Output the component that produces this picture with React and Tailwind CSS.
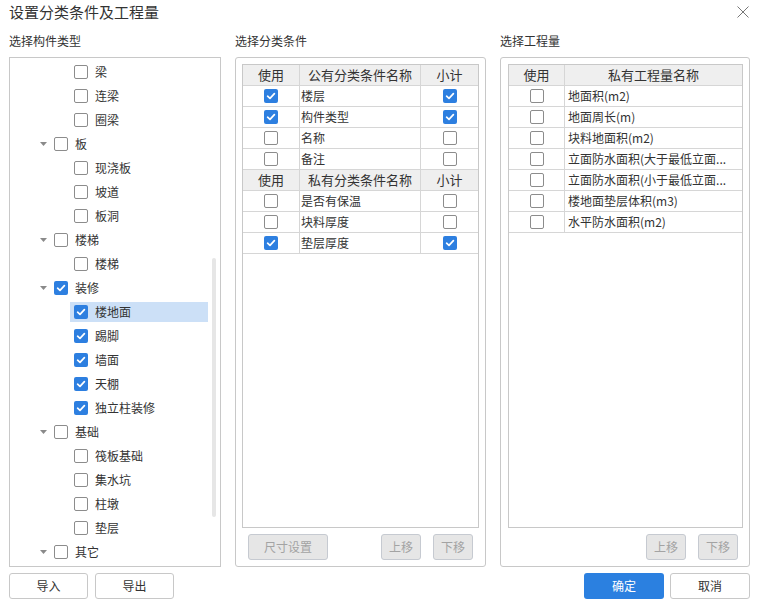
import React from "react";

const tree = [
    { t: "梁", l: 2 },
    { t: "连梁", l: 2 },
    { t: "圈梁", l: 2 },
    { t: "板", l: 1 },
    { t: "现浇板", l: 2 },
    { t: "坡道", l: 2 },
    { t: "板洞", l: 2 },
    { t: "楼梯", l: 1 },
    { t: "楼梯", l: 2 },
    { t: "装修", l: 1, c: true },
    { t: "楼地面", l: 2, c: true, sel: true },
    { t: "踢脚", l: 2, c: true },
    { t: "墙面", l: 2, c: true },
    { t: "天棚", l: 2, c: true },
    { t: "独立柱装修", l: 2, c: true },
    { t: "基础", l: 1 },
    { t: "筏板基础", l: 2 },
    { t: "集水坑", l: 2 },
    { t: "柱墩", l: 2 },
    { t: "垫层", l: 2 },
    { t: "其它", l: 1 },
];

const publicConds = [
    { t: "楼层", u: true, s: true },
    { t: "构件类型", u: true, s: true },
    { t: "名称" },
    { t: "备注" },
];

const privateConds = [
    { t: "是否有保温" },
    { t: "块料厚度" },
    { t: "垫层厚度", u: true, s: true },
];

const quantities = [
    "地面积(m2)",
    "地面周长(m)",
    "块料地面积(m2)",
    "立面防水面积(大于最低立面...",
    "立面防水面积(小于最低立面...",
    "楼地面垫层体积(m3)",
    "水平防水面积(m2)",
];

function Box({ checked }) {
    if (checked) {
        return (
            <span className="w-[14px] h-[14px] rounded-[2px] bg-[#2d7fe0] flex items-center justify-center shrink-0">
                <svg width="14" height="14" viewBox="0 0 14 14">
                    <path d="M3.6 7.2 L6 9.4 L10.4 4.6" fill="none" stroke="#fff" strokeWidth="1.7" strokeLinecap="round" strokeLinejoin="round" />
                </svg>
            </span>
        );
    }
    return <span className="block w-[14px] h-[14px] rounded-[2px] border border-[#8c8c8c] bg-white shrink-0" />;
}

function Caret() {
    return (
        <svg width="7" height="4" viewBox="0 0 7 4" className="shrink-0">
            <path d="M0 0 L7 0 L3.5 4 Z" fill="#8a8a8a" />
        </svg>
    );
}

function GrayBtn({ children, w }) {
    return (
        <div className={`${w} h-[26px] rounded-[3px] border border-[#c6cad1] bg-[#e6e6e6] text-[#a3a3a3] text-[12px] flex items-center justify-center`}>
            {children}
        </div>
    );
}

export default function App() {
    return (
        <div className="w-[759px] h-[614px] bg-white text-[#333] font-['Noto_Sans_CJK_SC',sans-serif] overflow-hidden">
            {/* title */}
            <div className="h-[24px] flex items-center justify-between pl-[9px] pr-[10px]">
                <span className="text-[15px] leading-[20px] text-[#333]">设置分类条件及工程量</span>
                <svg width="12" height="12" viewBox="0 0 12 12">
                    <path d="M0.5 0.5 L11.5 11.5 M11.5 0.5 L0.5 11.5" stroke="#777" strokeWidth="1" />
                </svg>
            </div>

            <div className="flex pl-[9px]">
                {/* component types */}
                <div className="w-[212px]">
                    <div className="h-[33px] flex items-center text-[12px]">选择构件类型</div>
                    <div className="relative h-[510px] border border-[#c8c8c8] overflow-hidden pt-[2px]">
                        {tree.map((n, i) => (
                            <div key={i} className="h-[24px] flex items-center">
                                {n.l === 1 ? (
                                    <div className="flex items-center pl-[30px] h-[20px]">
                                        <Caret />
                                        <div className="ml-[7px] flex"><Box checked={n.c} /></div>
                                        <span className="ml-[7px] text-[12px] leading-[20px]">{n.t}</span>
                                    </div>
                                ) : (
                                    <div className={`ml-[60px] w-[138px] h-[20px] flex items-center pl-[4px] ${n.sel ? "bg-[#cce0f7]" : ""}`}>
                                        <Box checked={n.c} />
                                        <span className="ml-[7px] text-[12px] leading-[20px]">{n.t}</span>
                                    </div>
                                )}
                            </div>
                        ))}
                        <div className="absolute right-[4px] top-[200px] w-[4px] h-[259px] rounded-full bg-[#e6e6e6]" />
                    </div>
                </div>

                {/* conditions */}
                <div className="w-[251px] ml-[14px]">
                    <div className="h-[33px] flex items-center text-[12px]">选择分类条件</div>
                    <div className="h-[510px] border border-[#c8c8c8] rounded-[3px] p-[6px] flex flex-col">
                        <div className="h-[464px] border border-[#c8c8c8] bg-white">
                            <HeaderRow a="使用" b="公有分类条件名称" />
                            {publicConds.map((r, i) => (
                                <CondRow key={i} r={r} />
                            ))}
                            <HeaderRow a="使用" b="私有分类条件名称" />
                            {privateConds.map((r, i) => (
                                <CondRow key={i} r={r} />
                            ))}
                        </div>
                        <div className="mt-[6px] flex items-center pl-[6px] pr-[6px]">
                            <GrayBtn w="w-[80px]">尺寸设置</GrayBtn>
                            <div className="flex-1" />
                            <GrayBtn w="w-[40px]">上移</GrayBtn>
                            <div className="w-[12px]" />
                            <GrayBtn w="w-[40px]">下移</GrayBtn>
                        </div>
                    </div>
                </div>

                {/* quantities */}
                <div className="w-[250px] ml-[14px]">
                    <div className="h-[33px] flex items-center text-[12px]">选择工程量</div>
                    <div className="h-[510px] border border-[#c8c8c8] rounded-[3px] pt-[6px] pb-[6px] pl-[7px] pr-[6px] flex flex-col">
                        <div className="h-[464px] border border-[#c8c8c8] bg-white">
                            <div className="h-[21px] flex bg-[#efefef] border-b border-[#d6d6d6] text-[13px]">
                                <div className="w-[56px] border-r border-[#d6d6d6] flex items-center justify-center">使用</div>
                                <div className="flex-1 flex items-center justify-center">私有工程量名称</div>
                            </div>
                            {quantities.map((q, i) => (
                                <div key={i} className="h-[21px] flex border-b border-[#d6d6d6] text-[12px]">
                                    <div className="w-[56px] border-r border-[#d6d6d6] flex items-center justify-center">
                                        <Box />
                                    </div>
                                    <div className="flex-1 min-w-0 flex items-center pl-[3px] whitespace-nowrap overflow-hidden">{q}</div>
                                </div>
                            ))}
                        </div>
                        <div className="mt-[6px] flex items-center justify-end pr-[5px]">
                            <GrayBtn w="w-[40px]">上移</GrayBtn>
                            <div className="w-[12px]" />
                            <GrayBtn w="w-[40px]">下移</GrayBtn>
                        </div>
                    </div>
                </div>
            </div>

            {/* footer */}
            <div className="mt-[6px] flex items-center justify-between pl-[9px] pr-[9px]">
                <div className="flex gap-[7px]">
                    <div className="w-[79px] h-[26px] rounded-[3px] border border-[#c8c8c8] bg-white text-[12px] flex items-center justify-center">导入</div>
                    <div className="w-[79px] h-[26px] rounded-[3px] border border-[#c8c8c8] bg-white text-[12px] flex items-center justify-center">导出</div>
                </div>
                <div className="flex gap-[6px]">
                    <div className="w-[80px] h-[26px] rounded-[3px] bg-[#2b80e0] text-white text-[12px] flex items-center justify-center">确定</div>
                    <div className="w-[80px] h-[26px] rounded-[3px] border border-[#c8c8c8] bg-white text-[12px] flex items-center justify-center">取消</div>
                </div>
            </div>
        </div>
    );
}

function HeaderRow({ a, b }) {
    return (
        <div className="h-[21px] flex bg-[#efefef] border-b border-[#d6d6d6] text-[13px]">
            <div className="w-[57px] border-r border-[#d6d6d6] flex items-center justify-center">{a}</div>
            <div className="w-[121px] border-r border-[#d6d6d6] flex items-center justify-center">{b}</div>
            <div className="flex-1 flex items-center justify-center">小计</div>
        </div>
    );
}

function CondRow({ r }) {
    return (
        <div className="h-[21px] flex border-b border-[#d6d6d6] text-[12px]">
            <div className="w-[57px] border-r border-[#d6d6d6] flex items-center justify-center">
                <Box checked={r.u} />
            </div>
            <div className="w-[121px] border-r border-[#d6d6d6] flex items-center pl-[1px]">{r.t}</div>
            <div className="flex-1 flex items-center justify-center">
                <Box checked={r.s} />
            </div>
        </div>
    );
}
